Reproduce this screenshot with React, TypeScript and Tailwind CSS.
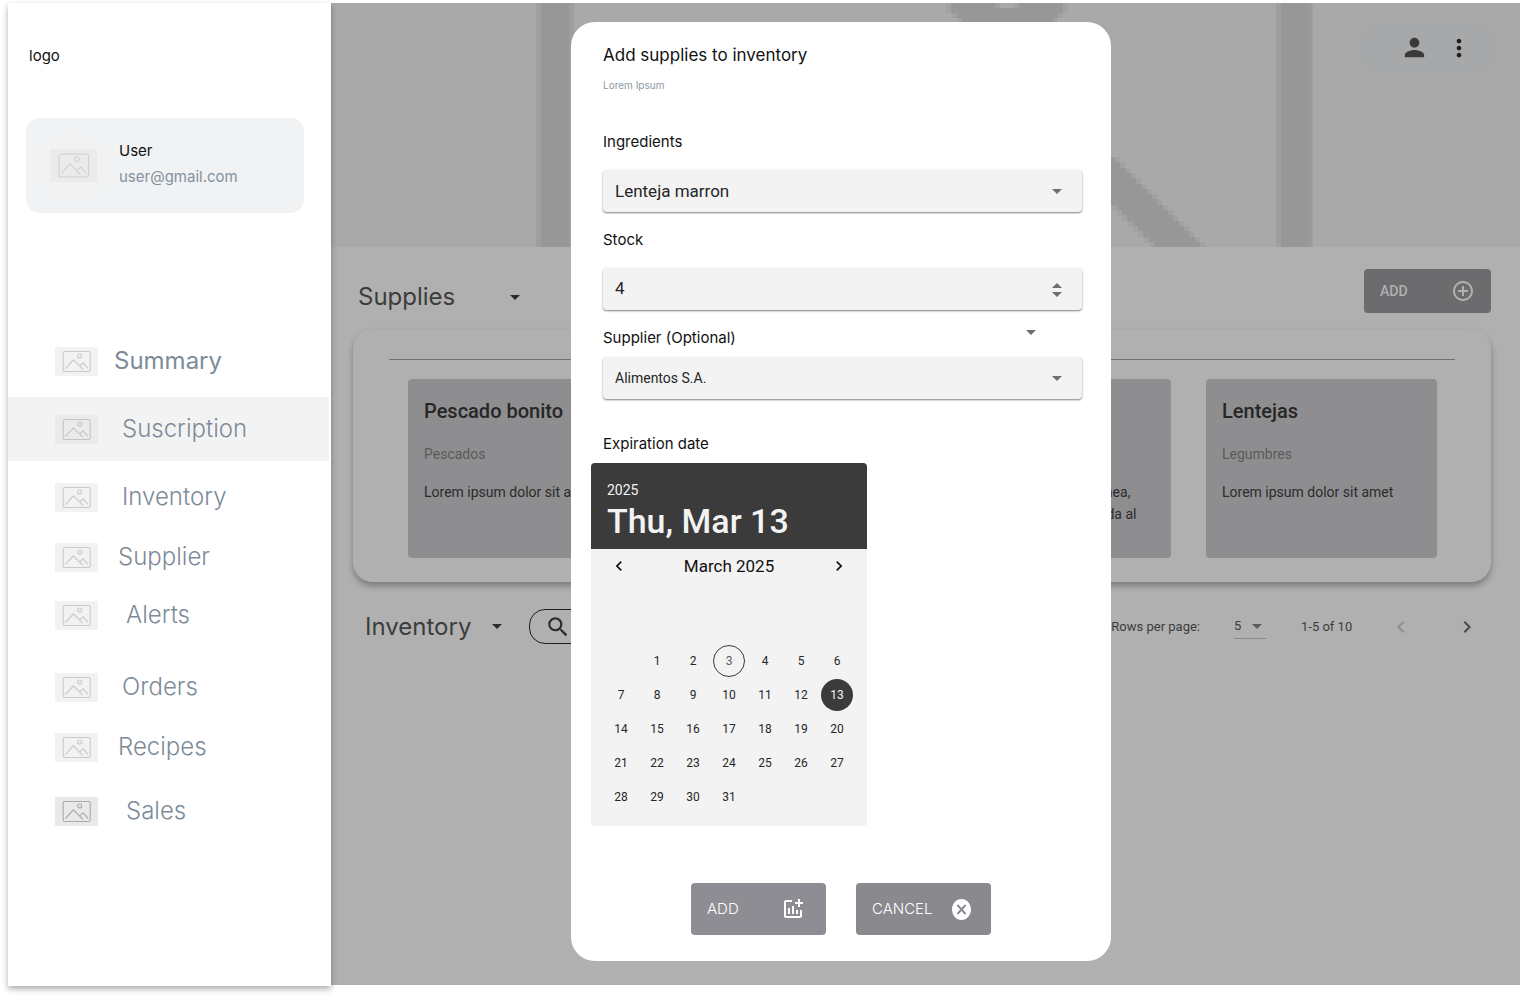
import React from "react";
import {
  MdAddCircleOutline,
  MdAddchart,
  MdChevronLeft,
  MdChevronRight,
  MdMoreVert,
  MdPerson,
  MdSearch,
} from "react-icons/md";

type Tone = "light" | "medium" | "strong" | "avatar";

const toneClasses: Record<Tone, string> = {
  light: "h-[29px] w-[43px] bg-[#f2f2f2] text-[#c9c9c9]",
  medium: "h-[29px] w-[43px] bg-[#ebebeb] text-[#c4c4c4]",
  strong: "h-[29px] w-[43px] bg-[#e9e9e9] text-[#a9a9a9]",
  avatar: "h-[33px] w-[47px] bg-[#ebebeb] text-[#d3d3d3]",
};

function Placeholder({ tone }: { tone: Tone }) {
  return (
    <svg
      viewBox="0 0 43 29"
      preserveAspectRatio="none"
      fill="none"
      stroke="currentColor"
      strokeWidth="1.1"
      className={`shrink-0 ${toneClasses[tone]}`}
      aria-hidden="true"
    >
      <rect x="8.2" y="4.5" width="27" height="20" rx="1.4" />
      <circle cx="24.7" cy="9" r="2" />
      <path d="M10.3 21.6 18.4 12.9 27.9 22.4M24.6 18.8 28.2 15.8 32.9 21.3" />
    </svg>
  );
}

function Caret({ className = "", up = false }: { className?: string; up?: boolean }) {
  return (
    <svg viewBox="0 0 10 5" className={`h-[5px] w-[10px] ${className}`} aria-hidden="true">
      <path d={up ? "M0 5h10L5 0z" : "M0 0h10L5 5z"} fill="currentColor" />
    </svg>
  );
}

const navItems: { label: string; tone: Tone; row: string; text: string }[] = [
  { label: "Summary", tone: "light", row: "h-18", text: "ml-4 font-normal" },
  { label: "Suscription", tone: "medium", row: "h-16 bg-[#f3f3f3]", text: "ml-6 font-light" },
  { label: "Inventory", tone: "light", row: "h-18", text: "ml-6 font-light" },
  { label: "Supplier", tone: "light", row: "h-12", text: "ml-5 font-light" },
  { label: "Alerts", tone: "light", row: "h-17", text: "ml-7 font-light" },
  { label: "Orders", tone: "light", row: "h-19", text: "ml-6 font-light" },
  { label: "Recipes", tone: "light", row: "h-11", text: "ml-5 font-light" },
  { label: "Sales", tone: "strong", row: "h-21", text: "ml-7 font-light" },
];

function Sidebar() {
  return (
    <aside className="relative z-20 flex w-[323px] shrink-0 flex-col bg-white shadow-[0_3px_6px_rgba(0,0,0,0.32)]">
      <p className="mt-[43px] pl-[21px] text-[15px] leading-5 text-[#111]">logo</p>
      <div className="mt-[52px] mr-[27px] ml-[18px] flex h-[95px] items-center rounded-[14px] bg-[#f0f2f4] pl-4">
        <div className="flex size-[62px] items-center justify-center rounded-full bg-[#f2f2f2]">
          <Placeholder tone="avatar" />
        </div>
        <div className="ml-[15px] pb-1 text-[15px] leading-[26px]">
          <p className="text-[#111]">User</p>
          <p className="text-[#84919c]">user@gmail.com</p>
        </div>
      </div>
      <nav className="mt-28">
        {navItems.map((item) => (
          <a
            key={item.label}
            href="#"
            className={`mr-[2px] flex items-center pl-[47px] text-[#7d8b98] ${item.row}`}
          >
            <Placeholder tone={item.tone} />
            <span className={`text-[24px] leading-8 ${item.text}`}>{item.label}</span>
          </a>
        ))}
      </nav>
    </aside>
  );
}

const diagonalRows = Array.from({ length: 17 }, (_, i) => i);
const ringRows = [
  { y: 0, x: 620, w: 112 },
  { y: 5, x: 620, w: 112 },
  { y: 10, x: 626, w: 101 },
  { y: 15, x: 631, w: 91 },
];

function Banner() {
  return (
    <header className="relative flex h-[244px] items-start justify-end overflow-hidden bg-[#a9a9a9]">
      <svg
        width="1189"
        height="244"
        className="absolute top-0 left-0"
        shapeRendering="crispEdges"
        aria-hidden="true"
      >
        <rect x="205" y="0" width="38" height="244" fill="#9f9f9f" />
        <rect x="210" y="0" width="28" height="244" fill="#979797" />
        <rect x="945" y="0" width="37" height="244" fill="#9f9f9f" />
        <rect x="950" y="0" width="27" height="244" fill="#979797" />
        <rect x="977" y="0" width="4" height="244" fill="#9a9a9a" />
        {ringRows.map((r) => (
          <g key={r.y}>
            <rect x={r.x - 5} y={r.y} width={r.w + 10} height="5" fill="#a2a2a2" />
            <rect x={r.x} y={r.y} width={r.w} height="5" fill="#979797" />
          </g>
        ))}
        <rect x="664" y="0" width="24" height="5" fill="#a2a2a2" />
        <rect x="669" y="0" width="14" height="5" fill="#a9a9a9" />
        {diagonalRows.map((i) => {
          const right = 784 + i * 5.3;
          return (
            <g key={i}>
              <rect x={right - 51} y={154 + i * 5.3} width="56" height="6" fill="#a2a2a2" />
              <rect x={right - 46} y={154 + i * 5.3} width="46" height="6" fill="#979797" />
            </g>
          );
        })}
      </svg>
      <div className="relative mt-5 mr-[23px] flex h-[53px] w-[140px] items-center justify-end gap-4 rounded-full bg-[#a7a8a9] pr-6 pb-1">
        <button type="button" aria-label="Account" className="text-[#3a3a3a]">
          <MdPerson size={29} />
        </button>
        <button type="button" aria-label="More options" className="text-[#1f1f1f]">
          <MdMoreVert size={28} />
        </button>
      </div>
    </header>
  );
}

const cards = [
  { title: "Pescado bonito", kind: "Pescados", body: ["Lorem ipsum dolor sit amet"] },
  { title: "", kind: "", body: [] },
  { title: "", kind: "", body: ["Crema de lentejas con linea,", "receta tipica recomendada al"] },
  { title: "Lentejas", kind: "Legumbres", body: ["Lorem ipsum dolor sit amet"] },
];

function Content() {
  return (
    <div className="flex flex-col pr-[29px] pl-[22px] text-[#3c3c3c]">
      <div className="mt-[22px] flex items-end">
        <h2 className="w-[157px] pl-[5px] text-[24px] leading-8">Supplies</h2>
        <button type="button" aria-label="Choose supplies view" className="flex h-8 items-center text-[#2a2a2a]">
          <Caret />
        </button>
        <button
          type="button"
          className="ml-auto flex h-11 w-[127px] items-center justify-between rounded-[4px] bg-[#6c6c6e] px-4 font-['Roboto',sans-serif] text-[14px] font-medium text-[#b0b0b0]"
        >
          ADD
          <MdAddCircleOutline size={24} />
        </button>
      </div>

      <section className="mt-4 h-[253px] rounded-[20px] bg-[#b0b0b0] px-9 pt-[30px] shadow-[0_4px_6px_rgba(0,0,0,0.3)]">
        <div className="h-px bg-[#68737a]" />
        <div className="mt-[19px] flex gap-[35px] pl-[19px] font-['Roboto',sans-serif]">
          {cards.map((card, i) => (
            <article key={i} className="h-[179px] w-[231px] shrink-0 rounded-[4px] bg-[#8e8e90] px-4 pt-5">
              <h3 className="h-6 text-[20px] leading-6 font-medium whitespace-nowrap text-[#262626]">{card.title}</h3>
              <p className="mt-[21px] h-5 text-[14px] leading-5 text-[#5a5a5a]">{card.kind}</p>
              <div className="mt-[17px] text-[14px] leading-[22px] whitespace-nowrap text-[#2b2b2b]">
                {card.body.map((line) => (
                  <p key={line}>{line}</p>
                ))}
              </div>
            </article>
          ))}
        </div>
      </section>

      <div className="mt-[27px] flex h-[35px] items-center">
        <h2 className="w-[127px] pl-3 text-[24px] leading-8">Inventory</h2>
        <button type="button" aria-label="Choose inventory view" className="ml-3 text-[#2a2a2a]">
          <Caret />
        </button>
        <label className="ml-[27px] flex h-[35px] w-[400px] items-center rounded-2xl border border-[#1f1f1f] pl-[15px] text-[#2b2b2b]">
          <MdSearch size={28} />
          <input type="search" aria-label="Search inventory" className="w-full bg-transparent outline-none" />
        </label>
        <div className="ml-auto flex items-center font-['Roboto',sans-serif] text-[13px] leading-5">
          <label htmlFor="rows">Rows per page:</label>
          <div className="relative ml-[34px] border-b border-[#8a8a8a]">
            <select id="rows" className="block h-6 w-8 appearance-none bg-transparent outline-none">
              <option>5</option>
            </select>
            <Caret className="pointer-events-none absolute top-[10px] right-1 text-[#5c5c5c]" />
          </div>
          <span className="ml-[35px] w-[50px] whitespace-nowrap">1-5 of 10</span>
          <button type="button" aria-label="Previous page" className="ml-[38px] text-[#8e8e8e]">
            <MdChevronLeft size={24} />
          </button>
          <button type="button" aria-label="Next page" className="mr-3 ml-[42px] text-[#4a4a4a]">
            <MdChevronRight size={24} />
          </button>
        </div>
      </div>
    </div>
  );
}

const fieldClasses =
  "block h-[42px] w-full appearance-none rounded-[4px] bg-[#f3f3f3] pl-3 font-['Roboto',sans-serif] text-[#262626] shadow-[0_1px_2px_rgba(0,0,0,0.5)] outline-none";

const days = Array.from({ length: 31 }, (_, i) => i + 1);

function dayClasses(day: number) {
  if (day === 13) return "bg-[#3b3b3b] text-[#f3f3f3]";
  if (day === 3) return "border border-[#3b3b3b] text-[#5f5f5f]";
  return "text-[#262626]";
}

function Calendar() {
  return (
    <div className="-ml-3 h-[363px] w-[276px] overflow-hidden rounded-[4px] bg-[#f3f3f3] font-['Roboto',sans-serif]">
      <div className="h-[86px] bg-[#3b3b3b] px-4 pt-[17px] text-[#f3f3f3]">
        <p className="text-[14px] leading-5">2025</p>
        <p className="text-[34px] leading-[42px] font-medium">Thu, Mar 13</p>
      </div>
      <div className="flex h-[34px] items-center justify-between px-[18px] text-[17px] text-[#111]">
        <button type="button" aria-label="Previous month">
          <MdChevronLeft size={20} />
        </button>
        <span>March 2025</span>
        <button type="button" aria-label="Next month">
          <MdChevronRight size={20} />
        </button>
      </div>
      <div className="mt-[61px] ml-3 grid w-[252px] grid-cols-7">
        <span />
        {days.map((day) => (
          <div key={day} className="flex h-[34px] items-center justify-center">
            <button type="button" className={`size-8 rounded-full text-[12px] ${dayClasses(day)}`}>
              {day}
            </button>
          </div>
        ))}
      </div>
    </div>
  );
}

function SupplyDialog() {
  return (
    <form
      role="dialog"
      aria-label="Add supplies to inventory"
      className="w-[540px] rounded-[24px] bg-white pt-[21px] pr-[29px] pb-[26px] pl-8 text-[15px] leading-5 text-[#111]"
    >
      <h1 className="text-[17px] leading-6">Add supplies to inventory</h1>
      <p className="mt-[10px] text-[10px] leading-4 text-[#8b98a2]">Lorem Ipsum</p>

      <label htmlFor="ingredient" className="mt-[39px] block">
        Ingredients
      </label>
      <div className="relative mt-[18px]">
        <select id="ingredient" className={`${fieldClasses} text-[17px]`}>
          <option>Lenteja marron</option>
        </select>
        <Caret className="pointer-events-none absolute top-[19px] right-5 text-[#6f6f6f]" />
      </div>

      <label htmlFor="stock" className="mt-[18px] block">
        Stock
      </label>
      <div className="relative mt-[18px]">
        <input
          id="stock"
          type="number"
          defaultValue={4}
          className={`${fieldClasses} pb-[2px] text-[17px] [appearance:textfield] [&::-webkit-inner-spin-button]:appearance-none`}
        />
        <div className="pointer-events-none absolute top-[15px] right-5 flex flex-col gap-[4px] text-[#6f6f6f]">
          <Caret up />
          <Caret />
        </div>
      </div>

      <div className="mt-[18px] flex items-start justify-between">
        <label htmlFor="supplier">Supplier (Optional)</label>
        <Caret className="mt-[2px] mr-[46px] text-[#6f6f6f]" />
      </div>
      <div className="relative mt-[9px]">
        <select id="supplier" className={`${fieldClasses} text-[14px]`}>
          <option>Alimentos S.A.</option>
        </select>
        <Caret className="pointer-events-none absolute top-[19px] right-5 text-[#6f6f6f]" />
      </div>

      <p className="mt-[35px] mb-[9px]">Expiration date</p>
      <Calendar />

      <div className="mt-[57px] ml-[88px] flex gap-[30px] font-light text-white">
        <button
          type="button"
          className="flex h-[52px] w-[135px] items-center justify-between rounded-[4px] bg-[#8e8d93] pr-[21px] pl-4"
        >
          ADD
          <MdAddchart size={24} />
        </button>
        <button
          type="button"
          className="flex h-[52px] w-[135px] items-center justify-between rounded-[4px] bg-[#8a898e] pr-5 pl-4"
        >
          CANCEL
          <svg viewBox="2 2 20 20" preserveAspectRatio="none" className="h-[21px] w-[19px]" aria-hidden="true">
            <path
              fill="currentColor"
              d="M12 2C6.47 2 2 6.47 2 12s4.47 10 10 10 10-4.47 10-10S17.53 2 12 2zm5 13.59L15.59 17 12 13.41 8.41 17 7 15.59 10.59 12 7 8.41 8.41 7 12 10.59 15.59 7 17 8.41 13.41 12 17 15.59z"
            />
          </svg>
        </button>
      </div>
    </form>
  );
}

export default function App() {
  return (
    <div className="flex min-h-screen bg-white pt-[3px] pb-3 pl-2 font-['Inter',sans-serif]">
      <Sidebar />
      <main className="relative mb-px min-w-0 flex-1 bg-[#b0b0b0]">
        <Banner />
        <Content />
        <div className="absolute inset-0 flex items-start pt-[19px] pl-60">
          <SupplyDialog />
        </div>
      </main>
    </div>
  );
}
